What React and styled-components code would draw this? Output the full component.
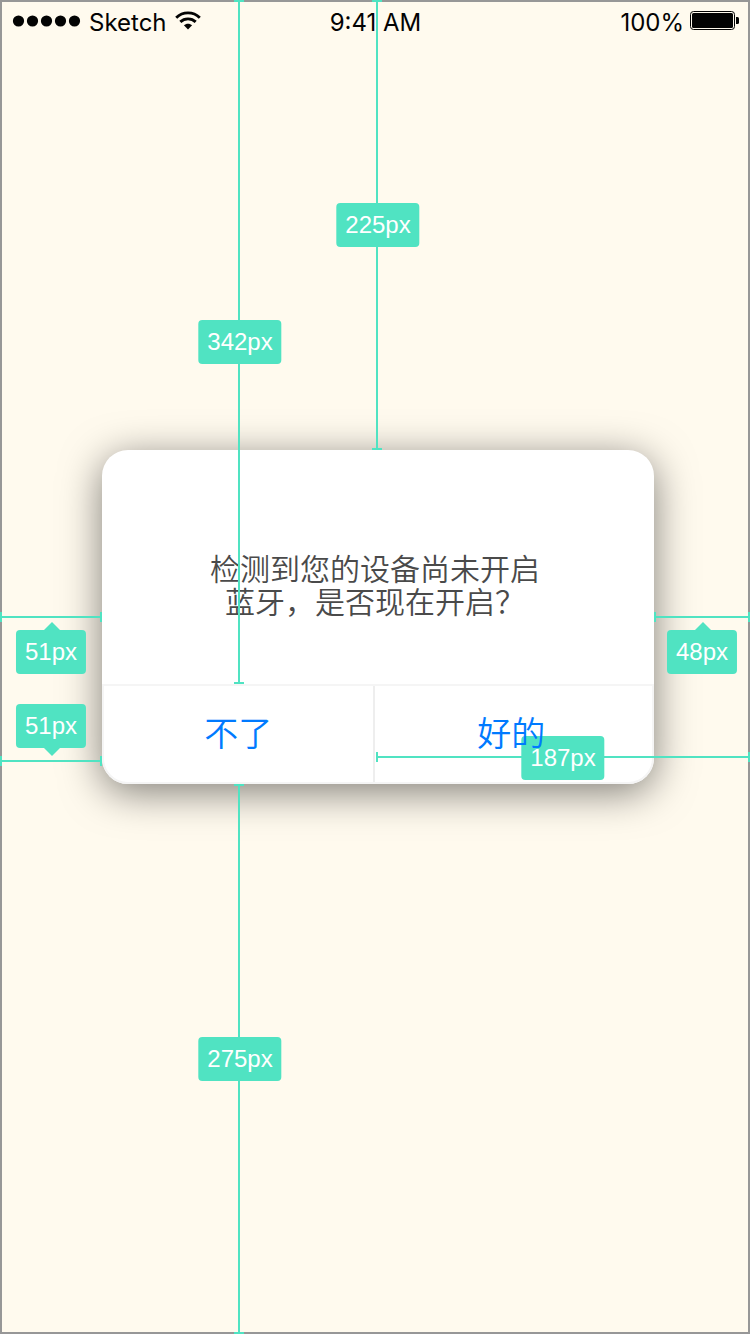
import React from "react";
import styled, { createGlobalStyle } from "styled-components";

const TEAL = "#50e3c2";

const GlobalStyle = createGlobalStyle`
  *, *::before, *::after { box-sizing: border-box; }
  body { margin: 0; background: #fffaee; }
`;

const Screen = styled.div`
  position: relative;
  min-height: 100vh;
  overflow: hidden;
  background: #fffaee;
  box-shadow: inset 0 0 0 2px #979797;
`;

const StatusBar = styled.header`
  display: grid;
  grid-template-columns: 1fr auto 1fr;
  height: 42px;
  padding: 2px 11px 0 12px;
  font: 24px/42px Inter, "Liberation Sans", sans-serif;
  color: #030303;
`;

const StatusGroup = styled.div`
  display: flex;
  align-items: center;
  justify-content: ${(p) => (p.$end ? "flex-end" : "flex-start")};
  gap: ${(p) => (p.$end ? 6 : 8)}px;

  svg {
    display: block;
    margin-bottom: 5px;
  }
`;

const Main = styled.main`
  padding: 408px 96px 0 102px;
`;

const Dialog = styled.section`
  height: 334px;
  display: flex;
  flex-direction: column;
  border-radius: 26px;
  background: #fff;
  box-shadow: 0 8px 40px rgba(0, 0, 0, 0.5);
`;

const Message = styled.p`
  flex: 1;
  margin: 0;
  padding: 101px 6px 0 0;
  text-align: center;
  font: 350 30px/33px "Noto Sans CJK SC", sans-serif;
  color: #4a4a4a;
`;

const Actions = styled.div`
  display: grid;
  grid-template-columns: 49fr 51fr;
  height: 100px;
  border: 2px solid #f5f5f5;
  border-radius: 0 0 26px 26px;
`;

const Action = styled.button`
  position: relative;
  z-index: 2;
  margin: 0;
  padding: 0 0 4px;
  border: 0;
  background: transparent;
  font: 350 34px/40px "Noto Sans CJK SC", sans-serif;
  color: #007aff;
  cursor: pointer;

  & + & {
    padding-right: 4px;
    border-left: 2px solid #eeeeee;
  }
`;

const Ruler = styled.div`
  position: absolute;
  z-index: ${(p) => p.$layer || 1};
  background: linear-gradient(${TEAL}, ${TEAL}) center no-repeat;
`;

const VerticalRuler = styled(Ruler)`
  top: ${(p) => p.$top}px;
  ${(p) => (p.$length ? `height: ${p.$length}px;` : "bottom: 0;")}
  left: ${(p) => p.$left};
  width: 10px;
  border-top: 2px solid ${TEAL};
  border-bottom: 2px solid ${TEAL};
  background-size: 2px 100%;
`;

const HorizontalRuler = styled(Ruler)`
  top: ${(p) => p.$top}px;
  left: ${(p) => p.$left || "auto"};
  right: ${(p) => p.$right || "auto"};
  width: ${(p) => p.$width || "auto"};
  height: 10px;
  border-left: 2px solid ${TEAL};
  border-right: 2px solid ${TEAL};
  background-size: 100% 2px;
`;

const Tag = styled.span`
  position: absolute;
  top: ${(p) => p.$y || "50%"};
  left: ${(p) => p.$x || "50%"};
  transform: translate(-50%, -50%);
  padding: 0 9px;
  border-radius: 4px;
  background: ${TEAL};
  color: #fff;
  font: 24px/44px "Liberation Sans", sans-serif;
  white-space: nowrap;

  &::after {
    content: "";
    position: absolute;
    left: 50%;
    display: ${(p) => (p.$arrow ? "block" : "none")};
    ${(p) => (p.$arrow === "up" ? "bottom: 100%;" : "top: 100%;")}
    width: 16px;
    height: 8px;
    margin-left: -7px;
    background: ${TEAL};
    clip-path: ${(p) =>
      p.$arrow === "up"
        ? "polygon(0 100%, 50% 0, 100% 100%)"
        : "polygon(0 0, 100% 0, 50% 100%)"};
  }
`;

const SignalDots = () => (
  <svg width="69" height="12" viewBox="0 0 69 12" aria-hidden="true">
    {[6.5, 20.5, 34.5, 48.5, 62.5].map((cx) => (
      <circle key={cx} cx={cx} cy="6" r="5.6" fill="#030303" />
    ))}
  </svg>
);

const Wifi = () => (
  <svg width="26" height="19" viewBox="0 0 26 19" aria-hidden="true">
    <g fill="none" stroke="#030303" strokeWidth="2.9">
      <path d="M1.2 6.7C7.8 .3 18.2 .3 24.8 6.7" />
      <path d="M5.3 10.9C9.6 6.8 16.4 6.8 20.7 10.9" />
    </g>
    <path fill="#030303" d="M13 18.4L8.9 14.3C11.2 12.1 14.8 12.1 17.1 14.3Z" />
  </svg>
);

const Battery = () => (
  <svg width="49" height="19" viewBox="0 0 49 19" aria-hidden="true">
    <rect x=".5" y=".5" width="44" height="18" rx="3" fill="none" stroke="#030303" />
    <rect x="2" y="2" width="41" height="15" rx="1.5" fill="#030303" />
    <path d="M46 6h1.5q1.5 0 1.5 1.5v4q0 1.5-1.5 1.5H46z" fill="#030303" />
  </svg>
);

export default function App() {
  return (
    <Screen>
      <GlobalStyle />
      <StatusBar>
        <StatusGroup>
          <SignalDots />
          <span>Sketch</span>
          <Wifi />
        </StatusGroup>
        <time>9:41 AM</time>
        <StatusGroup $end>
          <span>100%</span>
          <Battery />
        </StatusGroup>
      </StatusBar>

      <Main>
        <Dialog role="dialog" aria-labelledby="message">
          <Message id="message">
            检测到您的设备尚未开启
            <br />
            蓝牙，是否现在开启？
          </Message>
          <Actions>
            <Action type="button">不了</Action>
            <Action type="button">好的</Action>
          </Actions>
        </Dialog>
      </Main>

      <VerticalRuler $top={0} $length={450} $left="calc(50% - 3px)">
        <Tag $x="6px">225px</Tag>
      </VerticalRuler>
      <VerticalRuler $top={0} $length={684} $left="calc(50% - 141px)" $layer={3}>
        <Tag $x="6px">342px</Tag>
      </VerticalRuler>
      <VerticalRuler $top={784} $left="calc(50% - 141px)">
        <Tag $x="6px">275px</Tag>
      </VerticalRuler>
      <HorizontalRuler $top={612} $left="0" $width="102px">
        <Tag $y="40px" $arrow="up">51px</Tag>
      </HorizontalRuler>
      <HorizontalRuler $top={756} $left="0" $width="102px">
        <Tag $y="-30px" $arrow="down">51px</Tag>
      </HorizontalRuler>
      <HorizontalRuler $top={612} $right="0" $width="96px">
        <Tag $y="40px" $arrow="up">48px</Tag>
      </HorizontalRuler>
      <HorizontalRuler $top={752} $left="calc(50% + 1px)" $right="0">
        <Tag $y="6px">187px</Tag>
      </HorizontalRuler>
    </Screen>
  );
}
